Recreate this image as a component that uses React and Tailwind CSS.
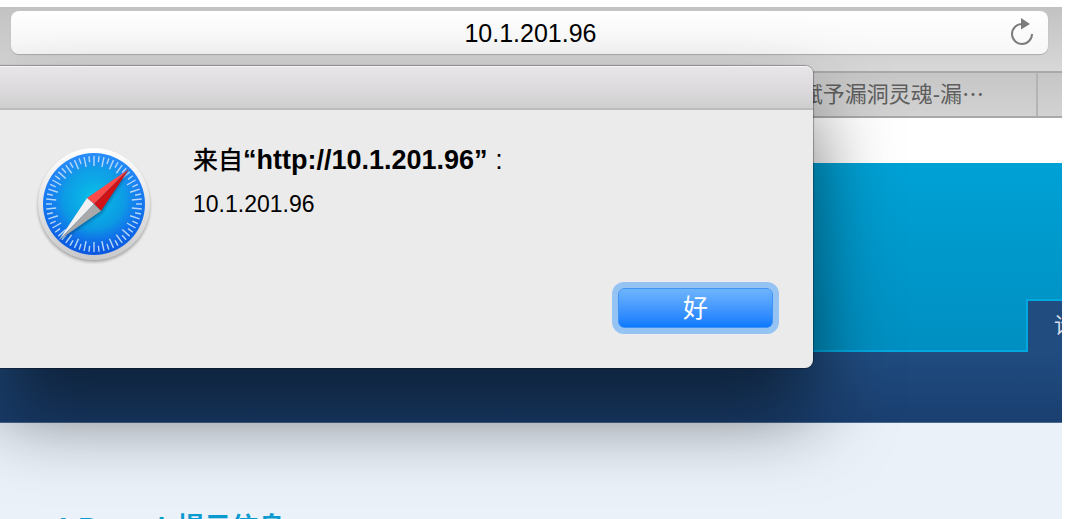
import React from "react";

// minute marks round the compass, every second one is longer
const ticks = Array.from({ length: 60 }, (_, i) => i);

function SafariIcon() {
  return (
    <svg className="w-30 h-30 shrink-0" viewBox="0 0 120 120" aria-hidden="true">
      <defs>
        <linearGradient id="rim" x1="0" y1="0" x2="0" y2="1">
          <stop offset="0" stopColor="#ffffff" />
          <stop offset="1" stopColor="#c9c9cb" />
        </linearGradient>
        <linearGradient id="face" x1="0" y1="0" x2="0" y2="1">
          <stop offset="0" stopColor="#2f8dff" />
          <stop offset="0.5" stopColor="#1376ee" />
          <stop offset="1" stopColor="#0a58e0" />
        </linearGradient>
        <radialGradient id="glow" cx="0.5" cy="0.45" r="0.5">
          <stop offset="0" stopColor="#08c4e8" />
          <stop offset="0.6" stopColor="#0aa4e2" stopOpacity="0.8" />
          <stop offset="1" stopColor="#1a80f5" stopOpacity="0" />
        </radialGradient>
        <filter id="soft" x="-20%" y="-20%" width="140%" height="140%">
          <feGaussianBlur stdDeviation="1.5" />
        </filter>
      </defs>
      <circle cx="60" cy="62" r="56" fill="#000" opacity="0.3" filter="url(#soft)" />
      <circle cx="60" cy="60" r="56" fill="url(#rim)" />
      <circle cx="60" cy="60" r="51" fill="url(#face)" />
      <circle cx="60" cy="60" r="51" fill="url(#glow)" />
      {ticks.map((i) => (
        <line
          key={i}
          x1="60"
          y1="12"
          x2="60"
          y2={i % 2 === 0 ? 22 : 18}
          stroke="#b5d8f6"
          strokeWidth="1.4"
          transform={`rotate(${i * 6} 60 60)`}
        />
      ))}
      <path d="M95 27 L68 69 L27 97 L54 57 Z" fill="#003a70" opacity="0.5" filter="url(#soft)" />
      <path d="M95 25 L53 54 L60 60 Z" fill="#ff4a4a" />
      <path d="M95 25 L60 60 L67 67 Z" fill="#cf1216" />
      <path d="M25 96 L53 54 L60 60 Z" fill="#f1f1f1" />
      <path d="M25 96 L60 60 L67 67 Z" fill="#a9a9a9" />
    </svg>
  );
}

function ReloadIcon() {
  return (
    <svg className="w-6 h-7" viewBox="0 0 24 28" aria-hidden="true">
      <path d="M12 6 A10 10 0 1 0 22 16" fill="none" stroke="#7c7c7c" strokeWidth="2" />
      <path d="M11 0 L20 6 L11 11.5 Z" fill="#7c7c7c" />
    </svg>
  );
}

function Toolbar() {
  return (
    <div className="h-16 shrink-0 pt-1 pl-[11px] pr-[14px] bg-linear-to-b from-[#c2c2c2] to-[#d8d8d8]">
      <div className="flex items-center h-[43px] rounded-lg pr-[14px] bg-linear-to-b from-white to-[#f7f7f7] shadow-[0_1px_1px_#aaa]">
        <input
          aria-label="Address"
          defaultValue="10.1.201.96"
          className="flex-1 min-w-0 pl-10 pt-0.5 text-center text-[25px] text-black bg-transparent outline-none"
        />
        <button aria-label="Reload" className="pb-0.5">
          <ReloadIcon />
        </button>
      </div>
    </div>
  );
}

function TabBar() {
  return (
    <div className="flex h-[47px] shrink-0 border-y-2 border-[#a9a9a9] bg-linear-to-b from-[#c6c6c6] to-[#d2d2d2]">
      <button className="flex-1 pr-[52px] text-right text-[22px] leading-8 text-[#5e5e5e] border-r-2 border-[#b4b4b4]">
        赋予漏洞灵魂-漏⋯
      </button>
      <div className="w-6"></div>
    </div>
  );
}

function Dialog() {
  return (
    <div
      role="alertdialog"
      aria-labelledby="dialog-title"
      className="absolute left-0 right-[249px] top-[59px] rounded-r-lg bg-[#ebebeb] shadow-[0_0_1px_1px_rgba(0,0,0,0.3),0_44px_80px_rgba(0,0,0,0.56)]"
    >
      <div className="h-11 rounded-tr-lg border-t border-t-[#f5f5f5] border-b-2 border-b-[#bcbcbc] bg-linear-to-b from-[#e8e5e8] via-[#dedbde] to-[#cfcfcf]"></div>
      <div className="flex gap-[39px] pl-[34px] pt-[34px]">
        <SafariIcon />
        <div>
          <h1 id="dialog-title" className="-mt-0.5 text-[27px] leading-9 font-bold">
            <span className="text-[25px] font-medium">来自</span>
            “http://10.1.201.96”<span className="font-normal"> :</span>
          </h1>
          <p className="mt-2 text-[23px] leading-9">10.1.201.96</p>
        </div>
      </div>
      <div className="flex justify-end pr-10 pb-10 pt-6">
        <button className="w-[155px] h-10 rounded-md text-[25px] leading-8 text-white border border-[#3f93f2] bg-linear-to-b from-[#6eb4fc] to-[#087aff] shadow-[0_0_0_6px_#95c3f3]">
          好
        </button>
      </div>
    </div>
  );
}

export default function App() {
  return (
    <div className="h-screen overflow-hidden pt-[7px] pr-4 bg-white font-['Liberation_Sans','Noto_Sans_CJK_SC',sans-serif]">
      <div className="relative flex flex-col h-full overflow-hidden">
        <Toolbar />
        <TabBar />
        <div className="h-[45px] shrink-0 bg-white"></div>
        <div className="flex items-end h-[189px] shrink-0 bg-linear-to-b from-[#00a1d5] to-[#008fc1]">
          <div className="flex-1 border-b-2 border-[#00a8e0]"></div>
          <a
            href="#"
            className="w-9 h-[53px] pl-[26px] pt-2 overflow-hidden whitespace-nowrap text-[22px] text-[#d6deea] border-t-2 border-l-2 border-[#00a8e0] bg-[#204c80]"
          >
            论坛
          </a>
        </div>
        <div className="h-[71px] shrink-0 border-b border-[#4a6a90] bg-linear-to-b from-[#204c80] to-[#1a3f70]"></div>
        <div className="flex-1 pl-[55px] pt-[87px] bg-[#eaf1f9]">
          <h2 className="text-[28px] leading-9 font-bold whitespace-nowrap text-[#0a9ad0]">
            1.Pound <span className="ml-1 text-[27px]">提示信息</span>
          </h2>
        </div>
        <Dialog />
      </div>
    </div>
  );
}
